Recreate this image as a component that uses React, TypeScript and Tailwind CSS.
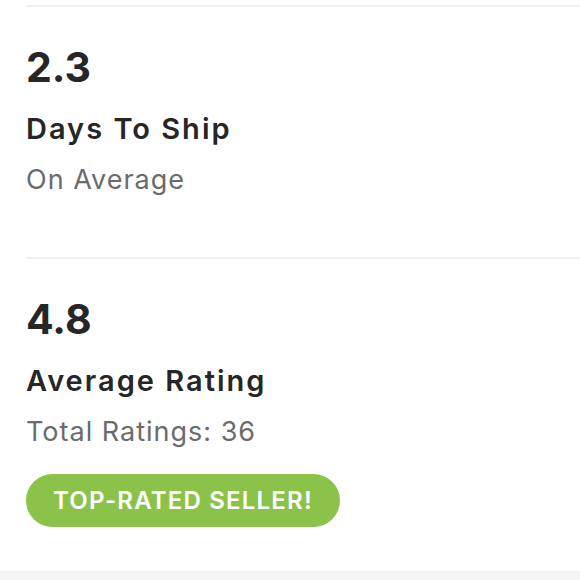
import React from 'react';

interface StatProps {
  value: string;
  title: string;
  caption: string;
  children?: React.ReactNode;
  last?: boolean;
}

const Stat = ({ value, title, caption, children, last }: StatProps) => {
  return <div className={`border-t-2 border-[#efefef] pt-[36px] ${last ? 'pb-[44px]' : 'pb-[60px]'}`}>
      <div className="text-[41px] leading-[48px] font-bold text-[#262626]">{value}</div>
      <div className="mt-5 text-[29px] leading-[36px] font-semibold tracking-[2px] text-[#262626]">{title}</div>
      <div className="mt-4 text-[27px] leading-[34px] tracking-[1px] text-[#6b6b6b]">{caption}</div>
      {children}
    </div>;
};

export default function App() {
  return <div className="w-[580px] h-[580px] overflow-hidden bg-white" style={{ fontFamily: 'Inter, "Noto Sans", sans-serif' }}>
      <div className="pt-[5px] pl-[26px]">
        <Stat value="2.3" title="Days To Ship" caption="On Average" />
        <Stat value="4.8" title="Average Rating" caption="Total Ratings: 36" last>
          <div className="mt-[25px] inline-flex items-center h-[53px] px-[27px] rounded-full bg-[#8bc34a]">
            <span className="text-[24px] font-semibold tracking-[1.2px] text-white">TOP-RATED SELLER!</span>
          </div>
        </Stat>
      </div>
      <div className="h-[20px] bg-[#f6f4f4] border-t border-[#efeded]" />
    </div>;
}
